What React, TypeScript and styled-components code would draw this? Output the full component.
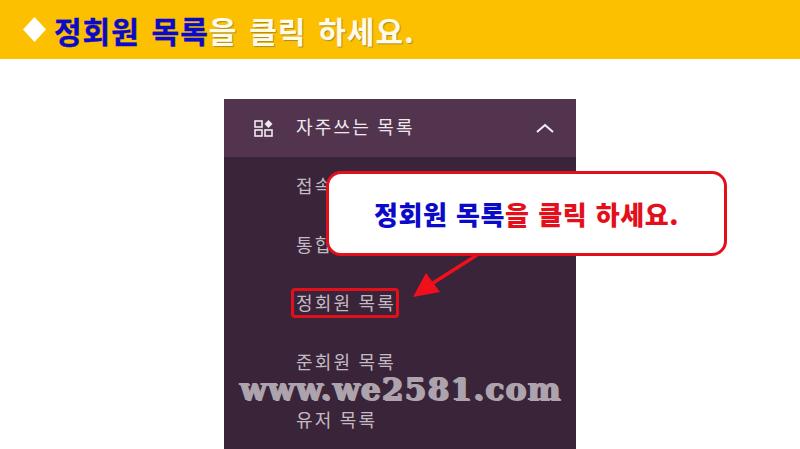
import React from "react";
import styled, { createGlobalStyle } from "styled-components";

const Global = createGlobalStyle`
  html, body { margin: 0; padding: 0; background: #fff; overflow: hidden; }
  body { font-family: "Noto Sans CJK KR", "Liberation Sans", sans-serif; }
`;

const Page = styled.div`
  position: relative;
  width: 800px;
  height: 449px;
  background: #fff;
  overflow: hidden;
  display: flex;
  flex-direction: column;
  align-items: center;
`;

const Banner = styled.header`
  align-self: stretch;
  height: 59px;
  background: #fdc000;
  display: flex;
  align-items: center;
  padding: 0 0 0 21px;
  gap: 6px;
  flex: none;
`;

const Title = styled.h1`
  margin: 0;
  font: 700 30px/1 "Noto Sans CJK KR", sans-serif;
  letter-spacing: 1px;
  word-spacing: 4px;
  color: #fffbe8;
  text-shadow: 1px 1px 1px #a58a30;
  white-space: pre;
`;

const TitleAccent = styled.span`
  color: #0a0ac8;
  text-shadow: none;
  -webkit-text-stroke: 0.4px #0a0ac8;
`;

const Menu = styled.nav`
  margin-top: 40px;
  width: 352px;
  flex: 1;
  background: #3a2439;
  display: flex;
  flex-direction: column;
`;

const MenuHead = styled.div`
  height: 58px;
  flex: none;
  background: #52344f;
  display: flex;
  align-items: center;
  padding: 0 21px 0 30px;
  color: #efe9ee;
`;

const HeadLabel = styled.span`
  margin-left: 22px;
  flex: 1;
  font-size: 18px;
  line-height: 1.2;
  letter-spacing: 2.2px;
  transform: translateY(-1px);
`;

const MenuList = styled.ul`
  list-style: none;
  margin: 0;
  padding: 0 0 0 72px;
`;

const MenuItem = styled.li`
  height: 58.5px;
  display: flex;
  align-items: center;
  font-size: 18px;
  line-height: 1.2;
  letter-spacing: 2.2px;
  color: #c3bac3;
`;

const Highlight = styled.span`
  position: relative;
  &::after {
    content: "";
    position: absolute;
    left: -5px;
    right: -3px;
    top: -4px;
    bottom: -4px;
    border: 3px solid #e3101c;
    border-radius: 4px;
  }
`;

const Callout = styled.div`
  position: absolute;
  left: 326px;
  top: 171px;
  width: 401px;
  height: 85px;
  box-sizing: border-box;
  border: 3px solid #e3101c;
  border-radius: 15px;
  background: #fff;
  display: flex;
  align-items: center;
  justify-content: center;
  font: 900 26px/1 "Noto Sans CJK KR", sans-serif;
  letter-spacing: 0.6px;
  word-spacing: 2px;
  color: #e3101c;
  white-space: pre;
`;

const CalloutAccent = styled.span`
  color: #0a0ac8;
`;

const ArrowSvg = styled.svg`
  position: absolute;
  left: 405px;
  top: 250px;
`;

const Watermark = styled.div`
  position: absolute;
  left: 240px;
  top: 374px;
  font: 700 31px/1 "DejaVu Serif", "Liberation Serif", serif;
  letter-spacing: 1.3px;
  color: #ada3ad;
  text-shadow: 1px 1px 0 #ada3ad, -1px 0 0 #ada3ad;
  white-space: pre;
`;

export default function App() {
  return (
    <Page>
      <Global />
      <Banner>
        <svg width="27" height="27" viewBox="0 0 27 27" aria-hidden="true">
          <polygon points="13.5,1 25,13.5 13.5,26 2,13.5" fill="#fff" />
        </svg>
        <Title>
          <TitleAccent>정회원 목록</TitleAccent>을 클릭 하세요.
        </Title>
      </Banner>
      <Menu>
        <MenuHead>
          <svg width="20" height="18" viewBox="0 0 20 18" fill="none" stroke="#efe9ee" strokeWidth="1.6" aria-hidden="true">
            <rect x="1" y="2" width="7" height="6" />
            <rect x="1" y="11" width="7" height="6" />
            <rect x="11" y="11" width="7" height="6" />
            <polygon points="14.5,1 18.5,5 14.5,9 10.5,5" fill="#efe9ee" stroke="none" />
          </svg>
          <HeadLabel>자주쓰는 목록</HeadLabel>
          <svg width="20" height="12" viewBox="0 0 20 12" fill="none" stroke="#f4eff3" strokeWidth="2" aria-hidden="true">
            <polyline points="2,10 10,3 18,10" />
          </svg>
        </MenuHead>
        <MenuList>
          <MenuItem>접속자 목록</MenuItem>
          <MenuItem>통합 목록</MenuItem>
          <MenuItem><Highlight>정회원 목록</Highlight></MenuItem>
          <MenuItem>준회원 목록</MenuItem>
          <MenuItem>유저 목록</MenuItem>
        </MenuList>
      </Menu>
      <ArrowSvg width="90" height="50" viewBox="0 0 90 50" aria-hidden="true">
        <line x1="72" y1="5" x2="28" y2="33" stroke="#f0101c" strokeWidth="3.5" />
        <polygon points="8,47 21,23 35,42" fill="#f0101c" />
      </ArrowSvg>
      <Callout>
        <span>
          <CalloutAccent>정회원 목록</CalloutAccent>을 클릭 하세요.
        </span>
      </Callout>
      <Watermark>www.we2581.com</Watermark>
    </Page>
  );
}
